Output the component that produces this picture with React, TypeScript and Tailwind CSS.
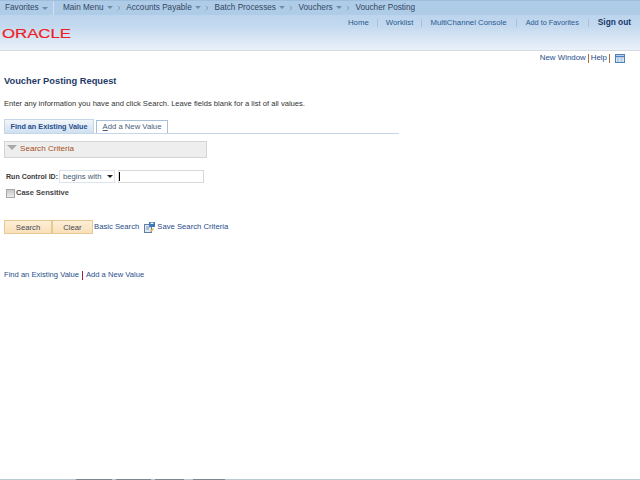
import { ChevronRight } from "lucide-react";

const font = { fontFamily: '"Liberation Sans", Arial, sans-serif' };

function Caret({ className = "border-t-[#6f8cab]" }: { className?: string }) {
  return <span className={`inline-block w-0 h-0 border-x-[3px] border-x-transparent border-t-[3px] ${className}`} />;
}

function Crumb({ label, caret = true }: { label: string; caret?: boolean }) {
  return (
    <div className="flex items-center">
      <span>{label}</span>
      {caret && <span className="ml-[3px] flex"><Caret /></span>}
      {caret && <ChevronRight className="ml-[2px] mr-[3.7px] w-[8px] h-[8px] text-[#5b7390]" strokeWidth={1.5} />}
    </div>
  );
}

function Header() {
  return (
    <header className="h-[51px] border-b border-[#d5dae3] bg-gradient-to-b from-[#b3cfeb] via-[#c2d8ee] to-[#eaf1fa]">
      <div className="h-[15px] bg-[#aecbe8] border-t border-[#a0bedb] flex items-center text-[8.2px] text-[#33475f] leading-none">
        <div className="w-[54px] h-full pl-[5px] flex items-center border-r border-[#d3e2f2]">
          <span>Favorites</span>
          <span className="ml-[3px] flex"><Caret /></span>
        </div>
        <div className="pl-[9px] flex items-center">
          <Crumb label="Main Menu" />
          <Crumb label="Accounts Payable" />
          <Crumb label="Batch Processes" />
          <Crumb label="Vouchers" />
          <Crumb label="Voucher Posting" caret={false} />
        </div>
      </div>
      <div className="flex justify-between">
        <svg width="74" height="16" className="mt-[11px] ml-[2px]">
          <text x="0" y="12" textLength="69" lengthAdjust="spacingAndGlyphs" fontSize="12.5" fill="#ee1c25" stroke="#ee1c25" strokeWidth="0.2" style={font}>ORACLE</text>
        </svg>
        <nav className="flex items-center h-[9px] mt-[3px] mr-[9px] text-[7.8px] text-[#2a5a92] leading-none">
          <span>Home</span>
          <span className="w-px h-[8px] bg-[#a9c0d8] mx-[8px]" />
          <span>Worklist</span>
          <span className="w-px h-[8px] bg-[#a9c0d8] mx-[8px]" />
          <span>MultiChannel Console</span>
          <span className="w-px h-[8px] bg-[#a9c0d8] mx-[9px]" />
          <span className="text-[7.3px]">Add to Favorites</span>
          <span className="w-px h-[8px] bg-[#a9c0d8] mx-[9px]" />
          <span className="font-bold text-[8.3px] text-[#17386b]">Sign out</span>
        </nav>
      </div>
    </header>
  );
}

function SaveIcon() {
  return (
    <svg width="11" height="11" viewBox="0 0 11 11" className="ml-[5px] mr-[2px]">
      <rect x="0.5" y="2.5" width="7" height="8" fill="#dfe8f3" stroke="#5d7fa8" />
      <rect x="5" y="0" width="6" height="5" fill="#3e78b8" />
      <rect x="6.5" y="0.5" width="3" height="1.5" fill="#e6eef7" />
      <path d="M2 5h4M2 7h3" stroke="#7d94b0" />
      <path d="M6 9l3-3 1 1-3 3z" fill="#e8b84a" />
    </svg>
  );
}

export default function App() {
  return (
    <div className="w-[640px] h-[480px] bg-white flex flex-col overflow-hidden" style={font}>
      <Header />
      <div className="flex justify-end items-center h-[14px] pr-[15px] text-[7.9px] text-[#1f4e8c] leading-none">
        <span>New Window</span>
        <span className="w-px h-[9px] bg-[#b0703a] mx-[2px]" />
        <span>Help</span>
        <span className="w-px h-[9px] bg-[#b0703a] mx-[2px]" />
        <svg width="10" height="9" viewBox="0 0 10 9" className="ml-[3px]">
          <rect x="0.5" y="0.5" width="9" height="8" fill="#dce7f4" stroke="#4f81bd" />
          <path d="M0 2.5h10" stroke="#4f81bd" strokeWidth="1.5" />
          <path d="M2 5h2M5.500 5h2M2 7h2M5.500 7h2" stroke="#8fb0d4" />
        </svg>
      </div>
      <main className="flex-1 pl-[4px] flex flex-col items-start">
        <h1 className="mt-[10px] text-[9.3px] leading-[12px] font-bold text-[#1f3a68]">Voucher Posting Request</h1>
        <p className="mt-[12px] text-[7.6px] leading-[10px] text-[#333333]">Enter any information you have and click Search. Leave fields blank for a list of all values.</p>
        <div className="mt-[10px] w-[395px] h-[15px] flex items-end border-b border-[#c5d6e8] leading-none">
          <div className="h-[14px] w-[90px] flex items-center justify-center font-bold text-[7.25px] text-[#1f4e8c] bg-gradient-to-b from-[#f2f6fb] to-[#cfe0f1] border border-b-0 border-[#c5d6e8]">Find an Existing Value</div>
          <div className="h-[13px] w-[72px] ml-[2px] flex items-center justify-center text-[7.7px] text-[#4a5d78] bg-white border border-b-0 border-[#a9bfd6]">
            <span><span className="underline">A</span>dd a New Value</span>
          </div>
        </div>
        <div className="mt-[7px] w-[203px] h-[17px] flex items-center bg-[#eeeeee] border border-[#d4d4d4] text-[8.1px] text-[#a8501c] leading-none">
          <span className="ml-[2px] mr-[3px] -mt-[4px] w-0 h-0 border-x-[5px] border-x-transparent border-t-[5px] border-t-[#a9a9a9]" />
          <span>Search Criteria</span>
        </div>
        <div className="mt-[12px] ml-[2px] flex items-center h-[13px] text-[7.7px] leading-none">
          <span className="w-[53px] font-bold text-[7.05px] text-[#3a3a3a] whitespace-nowrap">Run Control ID:</span>
          <div className="w-[56px] h-[13px] mr-[3px] flex items-center justify-between pl-[3px] pr-px border border-[#dde3ea] text-[#44586f] whitespace-nowrap">
            <span>begins with</span>
            <Caret className="border-t-[#222222]" />
          </div>
          <div className="w-[86px] h-[13px] border border-[#d8d8d8] flex items-center">
            <span className="w-px h-[9px] bg-black" />
          </div>
        </div>
        <div className="mt-[5px] ml-[2px] flex items-center h-[10px] text-[7.5px] font-bold text-[#444444] leading-none">
          <span className="w-[9px] h-[9px] mr-[1px] border border-[#a8a8a8] bg-gradient-to-b from-[#c8c8c8] to-[#ececec]" />
          <span>Case Sensitive</span>
        </div>
        <div className="mt-[22px] flex items-center text-[7.7px] leading-none">
          <button className="w-[48px] h-[14px] bg-gradient-to-b from-[#fdeed6] to-[#fae0b8] border border-[#e6c796] text-[#3d4a5c] pt-px">Search</button>
          <button className="w-[41px] h-[14px] bg-gradient-to-b from-[#fdeed6] to-[#fae0b8] border border-[#e6c796] text-[#3d4a5c] pt-px">Clear</button>
          <span className="ml-px text-[#1f4e8c]">Basic Search</span>
          <SaveIcon />
          <span className="text-[#1f4e8c]">Save Search Criteria</span>
        </div>
        <div className="mt-[36px] flex items-center h-[10px] text-[7.6px] text-[#1f4e8c] leading-none">
          <span>Find an Existing Value</span>
          <span className="w-px h-[9px] bg-[#8a2b3a] mx-[3px]" />
          <span>Add a New Value</span>
        </div>
      </main>
      <div className="h-px bg-[#b9c9d4] flex">
        <span className="ml-[76px] w-[36px] bg-[#7d8790]" />
        <span className="ml-[4px] w-[35px] bg-[#7d8790]" />
        <span className="ml-[4px] w-[29px] bg-[#7d8790]" />
        <span className="ml-[9px] w-[32px] bg-[#7d8790]" />
      </div>
    </div>
  );
}
